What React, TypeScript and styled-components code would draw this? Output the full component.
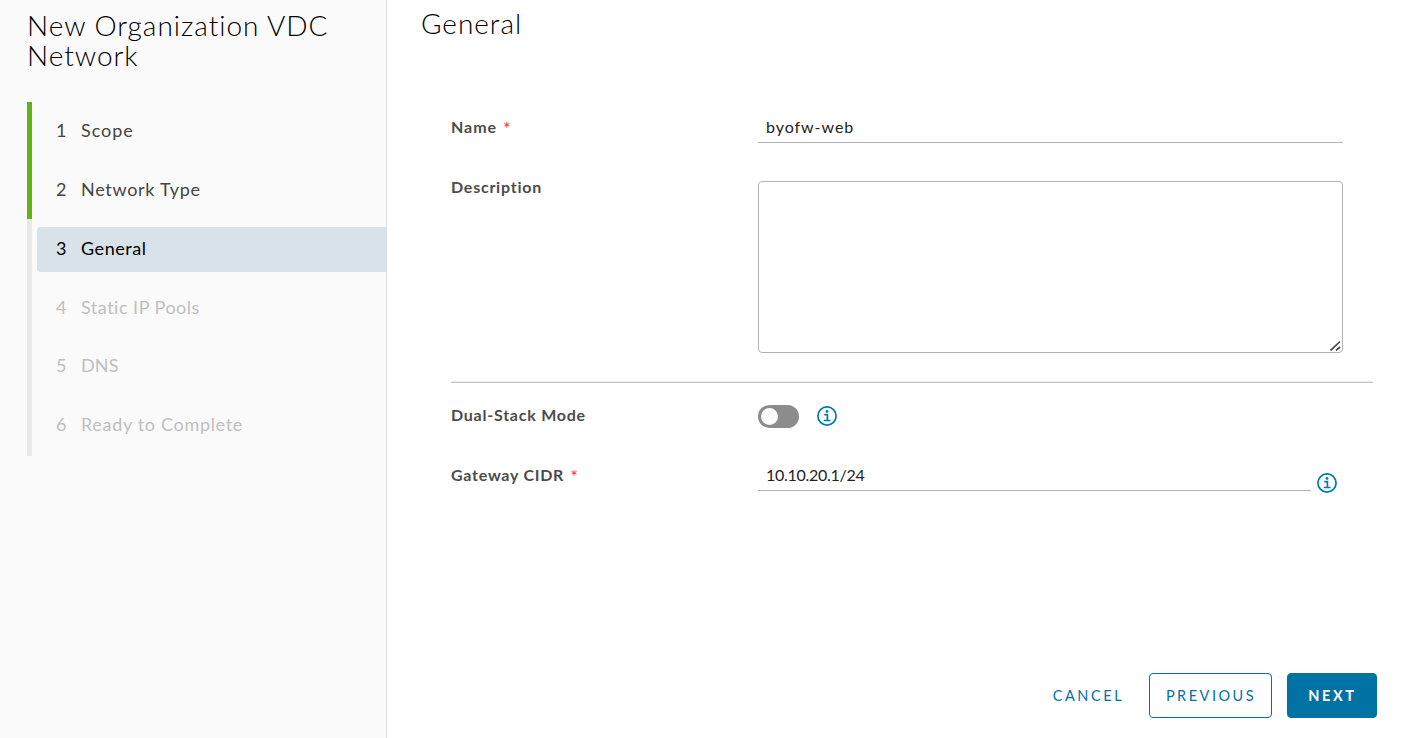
import React from "react";
import styled, { createGlobalStyle } from "styled-components";

const GlobalStyle = createGlobalStyle`
  *, *::before, *::after { box-sizing: border-box; }
  body {
    margin: 0;
    background: #fff;
    font-family: Lato, "Open Sans", sans-serif;
    color: #000;
  }
`;

const Wizard = styled.div`
  display: flex;
  height: 738px;
  overflow: hidden;
`;

const Sidebar = styled.aside`
  flex: 0 0 387px;
  padding: 10px 0 0 27px;
  background: #fafafa;
  border-right: 1px solid #dedede;
`;

const WizardTitle = styled.h1`
  margin: 0 0 32px;
  width: 330px;
  font-size: 28px;
  font-weight: 300;
  line-height: 30px;
  letter-spacing: 0.96px;
`;

const StepList = styled.ol`
  list-style: none;
  margin: 0;
  padding: 0;
`;

type StepState = "done" | "current" | "pending";

const stepColor = { done: "#454545", current: "#000", pending: "#bfbfbf" };

const StepItem = styled.li<{ $state: StepState }>`
  display: flex;
  height: 59px;
  padding: 7px 0 7px 5px;
  border-left: 5px solid ${(p) => (p.$state === "done" ? "#60b515" : "#e8e8e8")};
  color: ${(p) => stepColor[p.$state]};
  &:nth-child(2) { height: 58px; }
  &:nth-child(3) { padding-top: 8px; height: 60px; }
  &:nth-child(4) { height: 58px; }
  &:nth-child(6) { height: 60px; }
`;

const StepButton = styled.div<{ $state: StepState }>`
  flex: 1;
  display: flex;
  align-items: center;
  height: 45px;
  padding: 0 0 4px 19px;
  border-radius: 4px 0 0 4px;
  background: ${(p) => (p.$state === "current" ? "#d8e3e9" : "transparent")};
  font-size: 18px;
  line-height: 24px;
`;

const StepNumber = styled.span`
  width: 25px;
`;

const StepName = styled.span<{ $tracking: number }>`
  letter-spacing: ${(p) => p.$tracking}px;
`;

const Main = styled.main`
  flex: 1;
  display: flex;
  flex-direction: column;
  padding: 8px 51px 20px 34px;
`;

const PageTitle = styled.h2`
  margin: 0 0 74px;
  font-size: 28px;
  font-weight: 300;
  line-height: 30px;
  letter-spacing: 0.96px;
`;

const Form = styled.form`
  flex: 1;
  margin: 0 4px 0 30px;
`;

const Field = styled.div<{ $height: number }>`
  display: flex;
  align-items: flex-start;
  height: ${(p) => p.$height}px;
`;

const Label = styled.label<{ $tracking: number; $top?: number }>`
  flex: 0 0 307px;
  padding-top: ${(p) => p.$top ?? 3}px;
  font-size: 16px;
  font-weight: 700;
  line-height: 24px;
  letter-spacing: ${(p) => p.$tracking}px;
  color: #4c4c4c;
`;

const Required = styled.span`
  margin-left: 6px;
  font-size: 18px;
  line-height: 20px;
  vertical-align: -2px;
  font-weight: 400;
  color: #ff2a1f;
`;

const TextInput = styled.input<{ $width: number; $tracking: number }>`
  width: ${(p) => p.$width}px;
  height: 31px;
  padding: 0 8px 1px;
  border: 0;
  border-bottom: 1px solid #b3b3b3;
  outline: 0;
  background: transparent;
  font: 400 16px/24px Lato, "Open Sans", sans-serif;
  letter-spacing: ${(p) => p.$tracking}px;
  color: #222;
`;

const DescriptionBox = styled.div`
  display: flex;
  position: relative;
  width: 585px;
  height: 172px;
  margin-top: 9px;
`;

const TextArea = styled.textarea`
  flex: 1;
  resize: none;
  border: 1px solid #b3b3b3;
  border-radius: 4px;
  outline: 0;
`;

const ResizeGrip = styled.svg`
  position: absolute;
  right: 2px;
  bottom: 2px;
`;

const Divider = styled.hr`
  height: 2px;
  margin: 0 0 18px;
  border: 0;
  border-bottom: 1px solid #c4c4c4;
  background: #ececec;
`;

const Toggle = styled.div`
  width: 41px;
  height: 23px;
  margin: 4px 18px 0 0;
  padding: 3px;
  border-radius: 12px;
  background: #8c8c8c;
`;

const Knob = styled.div`
  width: 17px;
  height: 17px;
  border-radius: 50%;
  background: #fafafa;
`;

const InfoSvg = styled.svg<{ $top: number; $left: number }>`
  margin: ${(p) => p.$top}px 0 0 ${(p) => p.$left}px;
`;

const InfoIcon = ({ top, left }: { top: number; left: number }) => (
  <InfoSvg $top={top} $left={left} width="20" height="20" viewBox="0 0 20 20" fill="none" stroke="#0079ad">
    <circle cx="10" cy="10" r="9.1" strokeWidth="1.7" />
    <circle cx="10" cy="5.4" r="1.4" fill="#0079ad" stroke="none" />
    <path d="M7.3 8.7H10.4V14.4M6.8 14.5H13.5" strokeWidth="1.7" />
  </InfoSvg>
);

const Footer = styled.footer`
  display: flex;
  justify-content: flex-end;
`;

const Button = styled.button<{ $kind: "link" | "outline" | "solid"; $width: number; $gap: number; $tracking: number }>`
  width: ${(p) => p.$width}px;
  height: 45px;
  margin-left: ${(p) => p.$gap}px;
  padding: 0 0 0 1px;
  border: 1px solid ${(p) => (p.$kind === "link" ? "transparent" : "#0072a3")};
  border-radius: 4px;
  background: ${(p) => (p.$kind === "solid" ? "#0072a3" : "transparent")};
  color: ${(p) => (p.$kind === "solid" ? "#fff" : "#0072a3")};
  font-family: inherit;
  font-size: 14.5px;
  font-weight: ${(p) => (p.$kind === "solid" ? 700 : 400)};
  letter-spacing: ${(p) => p.$tracking}px;
`;

const steps: { name: string; state: StepState; tracking: number }[] = [
  { name: "Scope", state: "done", tracking: 0.95 },
  { name: "Network Type", state: "done", tracking: 0.7 },
  { name: "General", state: "current", tracking: 0.55 },
  { name: "Static IP Pools", state: "pending", tracking: 0.5 },
  { name: "DNS", state: "pending", tracking: 0.1 },
  { name: "Ready to Complete", state: "pending", tracking: 0.68 },
];

export default function App() {
  return (
    <>
      <GlobalStyle />
      <Wizard>
        <Sidebar>
          <WizardTitle>New Organization VDC Network</WizardTitle>
          <StepList>
            {steps.map((s, i) => (
              <StepItem key={s.name} $state={s.state}>
                <StepButton $state={s.state}>
                  <StepNumber>{i + 1}</StepNumber>
                  <StepName $tracking={s.tracking}>{s.name}</StepName>
                </StepButton>
              </StepItem>
            ))}
          </StepList>
        </Sidebar>
        <Main>
          <PageTitle>General</PageTitle>
          <Form>
            <Field $height={60}>
              <Label $tracking={0.95}>Name<Required>*</Required></Label>
              <TextInput $width={585} $tracking={0.95} defaultValue="byofw-web" />
            </Field>
            <Field $height={209}>
              <Label $tracking={0.76}>Description</Label>
              <DescriptionBox>
                <TextArea />
                <ResizeGrip width="11" height="11" viewBox="0 0 11 11" stroke="#4a4a4a" strokeWidth="1.7">
                  <path d="M0.5 10.5L10 1.5M6 10.5L10 7" />
                </ResizeGrip>
              </DescriptionBox>
            </Field>
            <Divider />
            <Field $height={59}>
              <Label $tracking={0.76} $top={2}>Dual-Stack Mode</Label>
              <Toggle><Knob /></Toggle>
              <InfoIcon top={4.6} left={0} />
            </Field>
            <Field $height={60}>
              <Label $tracking={0.74}>Gateway CIDR<Required>*</Required></Label>
              <TextInput $width={553} $tracking={-0.28} defaultValue="10.10.20.1/24" />
              <InfoIcon top={12.5} left={6} />
            </Field>
          </Form>
          <Footer>
            <Button $kind="link" $width={90} $gap={0} $tracking={2.6}>CANCEL</Button>
            <Button $kind="outline" $width={123} $gap={16} $tracking={2.5}>PREVIOUS</Button>
            <Button $kind="solid" $width={90} $gap={15} $tracking={2.6}>NEXT</Button>
          </Footer>
        </Main>
      </Wizard>
    </>
  );
}
